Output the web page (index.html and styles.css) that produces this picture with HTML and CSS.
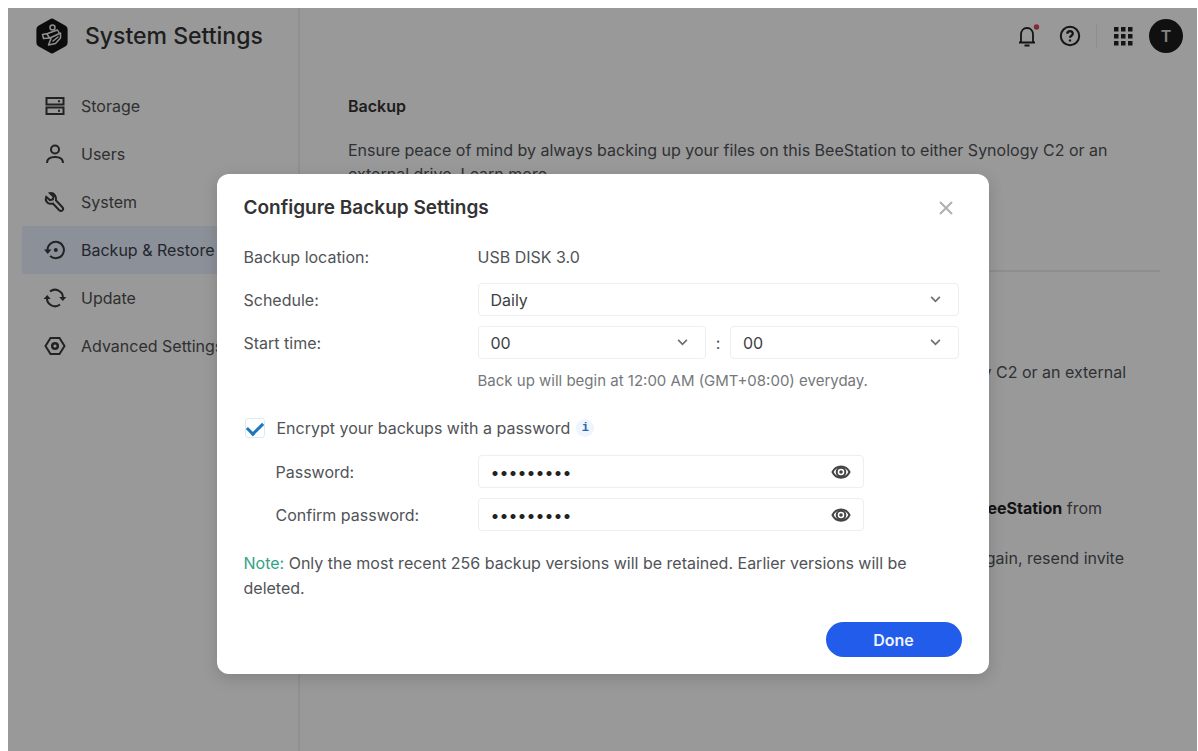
FILE: index.html
```html
<!DOCTYPE html>
<html lang="en">
<head>
<meta charset="utf-8">
<meta name="viewport" content="width=device-width, initial-scale=1">
<title>System Settings</title>
<link rel="stylesheet" href="styles.css">
</head>
<body>
<div class="app">
  <aside class="sidebar">
    <div class="brand">
      <svg class="logo" viewBox="0 0 34 36" fill="none" stroke-width="1.500" stroke-linecap="round" stroke-linejoin="round">
        <path d="M15 1.200a4 4 0 0 1 4 0l11.600 6.500a4 4 0 0 1 2 3.500v13.600a4 4 0 0 1-2 3.500L19 34.800a4 4 0 0 1-4 0L3.400 28.300a4 4 0 0 1-2-3.500V11.200a4 4 0 0 1 2-3.500z" fill="#151515" stroke="none"/>
        <circle cx="17.500" cy="9.500" r="2.500"/>
        <path d="M7.500 16.500l5-1 10-3.500 2 3.500-9.500 4.500-6.500.5zM12 16l2.500 4M16 20.500l-2.500 6.500 7-1.500 5-5.500v-5M18 23l5-4"/>
      </svg>
      <h1 class="brand-title">System Settings</h1>
    </div>
    <nav class="nav">
      <a class="nav-item" href="#storage">
        <svg class="icon" viewBox="0 0 22 22"><rect x="2.500" y="3" width="17" height="6.500"/><rect x="2.500" y="12.500" width="17" height="6.500"/><path d="M14 6.300h2M14 15.800h2"/></svg>
        Storage</a>
      <a class="nav-item" href="#users">
        <svg class="icon" viewBox="0 0 22 22"><circle cx="11" cy="6.500" r="4"/><path d="M3 20c0-4 3.500-6 8-6s8 2 8 6"/></svg>
        Users</a>
      <a class="nav-item" href="#system">
        <svg class="icon" viewBox="0 0 22 22"><path d="M6 2.200l3.500 3.300-.6 3-3 .6L2.200 5.800c-1.500 3.500 1 7.600 5.300 7l1.500-.3 6 6.500c2.500 2.500 5.500-.5 3.200-3L12 9.500c.8-4-2-8-6-7.300z"/></svg>
        System</a>
      <a class="nav-item nav-item-active" href="#backup">
        <svg class="icon" viewBox="0 0 22 22"><path d="M3.500 11a8.200 8.200 0 1 1 2.600 6"/><path class="solid" d="M0 10.500h7.500L3.700 15z"/><circle class="solid" cx="11.800" cy="11" r="2"/></svg>
        Backup &amp; Restore</a>
      <a class="nav-item" href="#update">
        <svg class="icon" viewBox="0 0 22 22"><path d="M6 4.500a8 8 0 0 1 13 6.500M16 17.500A8 8 0 0 1 3 11"/><path class="solid" d="M15.200 10h7.200l-3.600 4zM-.4 12h7.200L3.200 8z"/></svg>
        Update</a>
      <a class="nav-item" href="#advanced">
        <svg class="icon" viewBox="0 0 22 22"><path d="M6.500 3h9l5 8-5 8h-9l-5-8z"/><circle cx="11" cy="11" r="2.800" stroke-width="2.500"/></svg>
        Advanced Settings</a>
    </nav>
  </aside>

  <main class="main">
    <header class="topbar">
      <button class="tool" type="button" aria-label="Notifications">
        <svg class="icon-tool" viewBox="0 0 24 24"><path d="M4 18.500h16M6 18v-7.500C6 6.500 8.500 4 12 4s6 2.500 6 6.500V18" stroke-width="1.800"/><path d="M9.500 21.500h5" stroke-width="2"/><circle cx="21.500" cy="3" r="2.700" fill="#d9465f" stroke="none"/></svg>
      </button>
      <button class="tool tool-help" type="button" aria-label="Help">
        <svg class="icon-tool" viewBox="0 0 24 24"><circle cx="12" cy="12" r="9.200" stroke-width="2"/><path d="M9.300 9.800c0-3.700 5.700-3.500 5.500 0-.1 2-2.800 2-2.800 4M12 15.500v2" stroke-width="2.300"/></svg>
      </button>
      <span class="divider"></span>
      <button class="tool tool-apps" type="button" aria-label="Apps">
        <svg class="icon-tool dots" viewBox="0 0 24 24"><path d="M3 3h4.500v4.500H3zM10 3h4.500v4.500H10zM17 3h4.500v4.500H17zM3 10h4.500v4.500H3zM10 10h4.500v4.500H10zM17 10h4.500v4.500H17zM3 17h4.500v4.500H3zM10 17h4.500v4.500H10zM17 17h4.500v4.500H17z"/></svg>
      </button>
      <button class="avatar" type="button">T</button>
    </header>
    <div class="content">
      <section class="section">
        <h2 class="section-title">Backup</h2>
        <p class="text">Ensure peace of mind by always backing up your files on this BeeStation to either Synology C2 or an external drive. <a class="more" href="#more">Learn more</a></p>
      </section>
      <section class="details">
        <p class="text detail-restore">Restore from Synology C2 or an external</p>
        <p class="text detail-reset"><strong>BeeStation</strong> from</p>
        <p class="text detail-invite">again, resend invite</p>
      </section>
    </div>
  </main>

  <div class="overlay">
    <form class="dialog" role="dialog" aria-labelledby="dialog-title">
      <div class="dialog-head">
        <h2 class="dialog-title" id="dialog-title">Configure Backup Settings</h2>
        <button class="close" type="button" aria-label="Close">
          <svg class="icon-close" viewBox="0 0 16 16"><path d="M2 2l12 12M14 2L2 14"/></svg>
        </button>
      </div>
      <div class="fields">
        <div class="row"><span class="label">Backup location:</span><span class="value">USB DISK 3.0</span></div>
        <div class="row">
          <label class="label" for="schedule">Schedule:</label>
          <div class="control">
            <div class="select"><select id="schedule"><option>Daily</option><option>Weekly</option></select><svg class="chevron" viewBox="0 0 12 8"><path d="M1 1l5 5 5-5"/></svg></div>
          </div>
        </div>
        <div class="row">
          <label class="label" for="hour">Start time:</label>
          <div class="control">
            <div class="select"><select id="hour"><option>00</option></select><svg class="chevron" viewBox="0 0 12 8"><path d="M1 1l5 5 5-5"/></svg></div>
            <span class="colon">:</span>
            <div class="select"><select id="minute" aria-label="Start minute"><option>00</option></select><svg class="chevron" viewBox="0 0 12 8"><path d="M1 1l5 5 5-5"/></svg></div>
          </div>
        </div>
        <p class="help">Back up will begin at 12:00 AM (GMT+08:00) everyday.</p>
        <div class="check-row">
          <input class="check" type="checkbox" id="encrypt" checked>
          <label class="label" for="encrypt">Encrypt your backups with a password</label>
          <span class="info">i</span>
        </div>
        <div class="row row-sub">
          <label class="label" for="password">Password:</label>
          <div class="secret"><input id="password" type="password" value="beestatio"><button class="reveal" type="button" aria-label="Show password"><svg class="icon-eye" viewBox="0 0 20 14"><path d="M1.500 7C5-.5 15-.5 18.500 7 15 14.500 5 14.500 1.500 7z"/><circle cx="10" cy="7" r="4.300"/><circle class="pupil" cx="10" cy="7" r="1.800"/></svg></button></div>
        </div>
        <div class="row row-sub">
          <label class="label" for="confirm">Confirm password:</label>
          <div class="secret"><input id="confirm" type="password" value="beestatio"><button class="reveal" type="button" aria-label="Show confirmation"><svg class="icon-eye" viewBox="0 0 20 14"><path d="M1.500 7C5-.5 15-.5 18.500 7 15 14.500 5 14.500 1.500 7z"/><circle cx="10" cy="7" r="4.300"/><circle class="pupil" cx="10" cy="7" r="1.800"/></svg></button></div>
        </div>
      </div>
      <p class="note"><span class="note-tag">Note:</span> Only the most recent 256 backup versions will be retained. Earlier versions will be deleted.</p>
      <div class="actions"><button class="done" type="button">Done</button></div>
    </form>
  </div>
</div>
</body>
</html>
```
FILE: styles.css
```css
* { box-sizing: border-box; }
body { margin: 0; background: #fff; font: 16px/24px Inter, "Liberation Sans", sans-serif; color: #505357; }
h1, h2, p { margin: 0; }
button, input, select { font: inherit; color: inherit; }
button { border: 0; padding: 0; background: none; }
svg { display: block; fill: none; stroke: currentColor; }

.app { position: relative; display: flex; margin: 8px 1px 0 8px; min-height: calc(100vh - 8px); background: #fff; }
.sidebar { flex: 0 0 292px; border-right: 2px solid #f0f0f0; }
.brand { display: flex; align-items: center; gap: 16px; height: 56px; padding-left: 27px; }
.logo { width: 34px; height: 36px; stroke: #f0f0f0; }
.brand-title { font-size: 23px; font-weight: 500; color: #333; white-space: nowrap; }
.nav { padding: 18px 14px; }
.nav-item { display: flex; align-items: center; gap: 15px; height: 48px; padding-left: 22px; color: #505050; text-decoration: none; white-space: nowrap; }
.nav-item-active { background: #e9f1ff; color: #3a404c; }
.icon { width: 22px; height: 22px; stroke-width: 2; overflow: visible; color: #3a3a3a; }
.solid { fill: currentColor; stroke: none; }

.main { flex: 1; min-width: 0; }
.topbar { display: flex; align-items: center; justify-content: flex-end; height: 56px; padding-right: 14px; color: #222; }
.tool { margin-right: 19px; }
.tool-help { margin-right: 14px; }
.tool-apps { margin-right: 14px; }
.icon-tool { width: 24px; height: 24px; overflow: visible; }
.dots { fill: currentColor; stroke: none; }
.divider { width: 1px; height: 24px; margin-right: 14px; background: #ececec; }
.avatar { width: 34px; height: 34px; border-radius: 50%; background: #1c1c1c; color: #ddd; font-weight: 600; }
.content { padding: 30px 37px 40px 48px; }
.section { height: 178px; border-bottom: 2px solid #ededed; }
.section-title { font-size: 16px; line-height: 24px; font-weight: 600; color: #333; margin-bottom: 20px; }
.more { color: inherit; text-decoration: none; }
.details { padding-top: 88px; text-align: right; }
.details strong { color: #222; font-weight: 700; }
.detail-restore { padding-right: 34px; margin-bottom: 112px; }
.detail-reset { padding-right: 58px; margin-bottom: 26px; }
.detail-invite { padding-right: 36px; }

.overlay { position: absolute; inset: 0; display: flex; justify-content: center; align-items: flex-start; padding: 166px 16px 16px; background: rgba(0, 0, 0, .4); }
.dialog { width: 772px; max-width: 100%; padding: 17px 27px; border-radius: 12px; background: #fff; box-shadow: 0 4px 16px rgba(0, 0, 0, .16); }
.dialog-head { display: flex; align-items: center; justify-content: space-between; height: 33px; padding-right: 8px; margin-bottom: 16px; }
.dialog-title { font-size: 19px; font-weight: 600; color: #333; }
.icon-close { width: 16px; height: 16px; color: #b0b0b0; stroke-width: 2; }
.fields { display: flex; flex-direction: column; gap: 10px; padding-right: 3px; }
.row { display: grid; grid-template-columns: 234px 1fr; align-items: center; min-height: 33px; }
.row-sub { padding-left: 32px; grid-template-columns: 202px 386px; }
.control { display: flex; align-items: center; }
.select { flex: 1; display: grid; grid-template-columns: 1fr 35px; align-items: center; height: 33px; border: 1px solid #eceeef; border-radius: 4px; }
.select select { grid-area: 1 / 1 / 2 / 3; width: 100%; height: 31px; padding: 0 35px 0 12px; border: 0; background: none; appearance: none; color: #3c3f43; }
.chevron { grid-area: 1 / 2; width: 11px; height: 7px; margin-left: 7px; color: #707070; stroke-width: 2; pointer-events: none; }
.colon { width: 24px; text-align: center; }
.help { padding-left: 234px; font-size: 15px; line-height: 24px; color: #75787b; }
.check-row { display: flex; align-items: center; height: 34px; margin-top: 8px; }
.check { appearance: none; width: 20px; height: 20px; margin: 0 12px 0 1px; border: 1px solid #dfeaf2; border-radius: 3px; display: grid; place-items: center; }
.check:checked::before { content: ""; width: 7px; height: 13px; border: solid #1b78bd; border-width: 0 3px 3px 0; transform: rotate(45deg); margin-bottom: 4px; }
.info { width: 18px; height: 18px; margin-left: 6px; border-radius: 50%; background: #eef5ff; color: #2f64ad; font: bold 12px/18px "Liberation Mono", monospace; text-align: center; }
.secret { display: flex; align-items: center; height: 33px; border: 1px solid #eceeef; border-radius: 4px; padding-right: 12px; }
.secret input { flex: 1; min-width: 0; height: 31px; padding: 0 12px; border: 0; background: none; color: #222; }
.icon-eye { width: 20px; height: 14px; color: #444; stroke-width: 2; }
.pupil { fill: currentColor; stroke: none; }
.note { margin-top: 20px; line-height: 25px; }
.note-tag { color: #35a287; }
.actions { display: flex; justify-content: flex-end; margin-top: 21px; }
.done { width: 136px; height: 35px; border-radius: 18px; background: #215cea; color: #eef3ff; font-weight: 600; }
```
